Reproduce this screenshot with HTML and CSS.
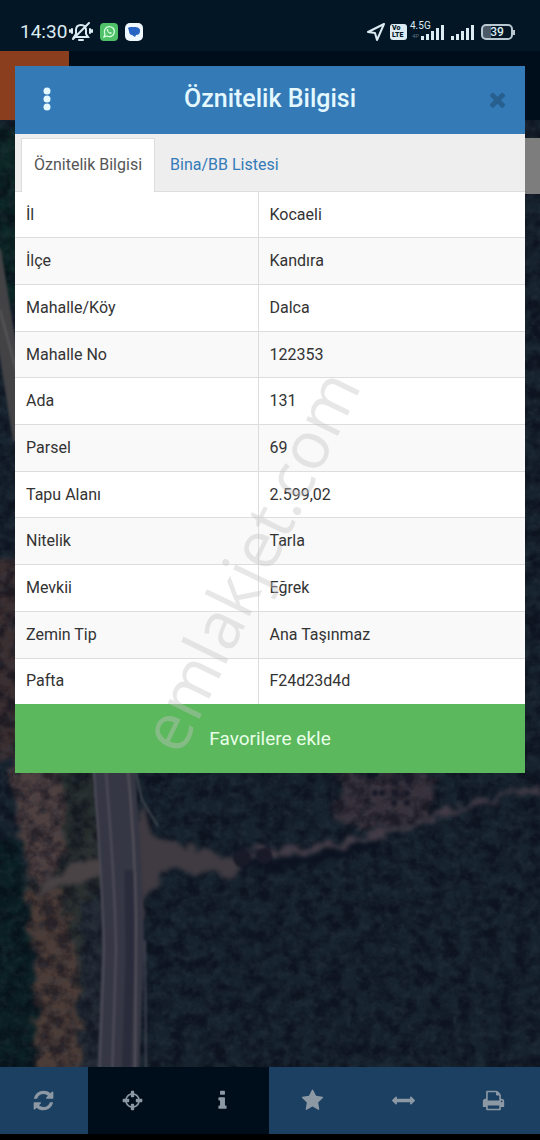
FILE: index.html
```html
<!DOCTYPE html>
<html lang="tr">
<head>
  <meta charset="UTF-8">
  <meta name="viewport" content="width=device-width, initial-scale=1">
  <title>Öznitelik Bilgisi</title>
  <link rel="stylesheet" href="styles.css">
</head>
<body>
<div class="screen">

  <header class="statusbar">
    <span class="clock">14:30</span>
    <svg class="st-bell" viewBox="0 0 24 20" fill="none" stroke="currentColor" stroke-width="2" stroke-linecap="round">
      <path d="M5 15h14l-2-3V8c0-3-2-5-5-5S7 5 7 8v4zM10 18h4M20 1 4 17M3 7v4M1 8v2M21 7v4M23 8v2"/>
    </svg>
    <svg class="st-app" viewBox="0 0 18 18">
      <rect width="18" height="18" rx="4" fill="#4fc168"/>
      <path d="M4 14l1-3a5 5 0 1 1 2 2z" fill="none" stroke="#d8ffe0" stroke-width="1.3"/>
      <path d="M7 6c-1 2 2 5 4 5l1-1-1.500-1-1 .5-1.500-1.500.5-1L8 6z" fill="#d8ffe0"/>
    </svg>
    <svg class="st-app" viewBox="0 0 18 18">
      <rect width="18" height="18" rx="5" fill="#f0f8ff"/>
      <path d="M3 5c1-1 2-1 6-1 4 0 6 1 6 4s-2 4-4 4l-1 2-3-2C5 12 4 10 4 8z" fill="#2864c4"/>
    </svg>
    <span class="spacer"></span>
    <svg class="st-nav" viewBox="0 0 20 20" fill="none" stroke="currentColor" stroke-width="2" stroke-linejoin="round">
      <path d="M18 2 2 10l7 1 2 7z"/>
    </svg>
    <span class="volte"><span>Vo</span><span>LTE</span></span>
    <span class="net"><span>4.5G</span><small>4P</small></span>
    <svg class="st-signal first" viewBox="0 0 24 16" fill="currentColor">
      <path d="M0 12h3v4H0zM5 10h3v6H5zM10 7h3v9h-3zM15 4h3v12h-3zM20 1h3v15h-3z"/>
    </svg>
    <svg class="st-signal" viewBox="0 0 24 16" fill="currentColor">
      <path d="M0 12h3v4H0zM5 10h3v6H5zM10 7h3v9h-3zM15 4h3v12h-3zM20 1h3v15h-3z"/>
    </svg>
    <span class="battery">39</span>
  </header>

  <div class="topbar"><div class="logo-cell"></div></div>

  <main class="map">
    <svg class="map-image" viewBox="0 120 540 947" preserveAspectRatio="xMidYMax slice" color-interpolation-filters="sRGB">
      <defs>
        <filter id="rough" x="-10%" y="-10%" width="120%" height="120%">
          <feTurbulence type="fractalNoise" baseFrequency="0.06" numOctaves="3" seed="4" result="n"/>
          <feDisplacementMap in="SourceGraphic" in2="n" scale="24" xChannelSelector="R" yChannelSelector="G"/>
          <feGaussianBlur stdDeviation="2"/>
        </filter>
        <filter id="soft" x="-20%" y="-5%" width="140%" height="110%">
          <feGaussianBlur stdDeviation="0.8"/>
        </filter>
        <filter id="canopy" x="0" y="0" width="100%" height="100%">
          <feTurbulence type="fractalNoise" baseFrequency="0.07" numOctaves="4" seed="11"/>
          <feColorMatrix values="0 0 0 0 0.02  0 0 0 0 0.03  0 0 0 0 0.08  3 0 0 0 -1.100"/>
          <feGaussianBlur stdDeviation="0.7"/>
        </filter>
        <filter id="glints" x="0" y="0" width="100%" height="100%">
          <feTurbulence type="fractalNoise" baseFrequency="0.13" numOctaves="3" seed="27"/>
          <feColorMatrix values="0 0 0 0 0.22  0 0 0 0 0.27  0 0 0 0 0.32  3 0 0 0 -1.300"/>
          <feGaussianBlur stdDeviation="0.7"/>
        </filter>
      </defs>

      <rect y="120" width="540" height="947" fill="#16222d"/>

      <!-- scrub and bare soil left of the road -->
      <g filter="url(#rough)">
        <path d="M-20 120h45v180h-45z" fill="#0c2625"/>
        <path d="M-20 560h50v200h-50z" fill="#3a2e30"/>
        <path d="M8 740h92v340H28L36 960 22 900l14-50z" fill="#2a2f2f"/>
        <path d="M12 760h54l10 80-40 50-20-60z" fill="#4f4040"/>
        <path d="M28 890l34-4 12 60 8 130H30l6-100z" fill="#4c3c37"/>
        <path d="M-20 830l40 10 12 100 6 140h-60z" fill="#0a1f23"/>
        <path d="M60 760h36v70l-30 20z" fill="#252c2c"/>
        <path d="M82 900h22v170H80z" fill="#232a34"/>
        <path d="M340 772h100l-10 46-60 12-36-8z" fill="#37313b"/>
      </g>

      <rect y="120" width="540" height="947" filter="url(#canopy)" opacity=".5"/>
      <rect y="120" width="540" height="947" filter="url(#glints)" opacity=".2"/>

      <!-- dirt tracks -->
      <g filter="url(#rough)">
        <path d="M104 856 70 866 40 882l-2 12 40-12 30-8z" fill="#4a4345"/>
        <path d="M136 800l14 28 34 20 60 10v16l-80-2-20 20-12 60z" fill="#403b42"/>
        <path d="M240 853l66-2 56-14 68-18 66-24 44-8" fill="none" stroke="#443d48" stroke-width="5"/>
        <path d="M240 862l70 0 70-20" fill="none" stroke="#0c1220" stroke-width="9"/>
      </g>

      <!-- main road -->
      <g filter="url(#soft)" fill="none">
        <path d="M113 760q10 120 10 190l-5 130" stroke="#363744" stroke-width="42"/>
        <path d="M129 870l1 90-4 120" stroke="#2a2c3b" stroke-width="9"/>
        <path d="M93 760q9 120 11 190l-5 130M105 760q10 120 11 190l-4 130" stroke="#4f4f5b" stroke-width="2"/>
        <path d="M127 760q8 80 9 160l-1 160" stroke="#55535c" stroke-width="2"/>
        <path d="M136 772l6 28 16 26" stroke="#3e464e" stroke-width="2"/>
        <path d="M145 940l1 140" stroke="#3d414c" stroke-width="2"/>
        <path d="M-8 250 22 440" stroke="#434346" stroke-width="18"/>
        <path d="M0 310l16 60" stroke="#6c6c6c" stroke-width="1"/>
      </g>

      <g fill="#191a28" filter="url(#soft)">
        <circle cx="375" cy="793" r="3"/><circle cx="395" cy="783" r="3"/><circle cx="408" cy="781" r="3"/>
        <circle cx="382" cy="793" r="3"/><circle cx="395" cy="793" r="3"/><circle cx="407" cy="793" r="3"/>
        <circle cx="394" cy="803" r="3"/><circle cx="407" cy="803" r="3"/>
        <circle cx="242" cy="858" r="9"/><circle cx="264" cy="856" r="8"/>
      </g>
    </svg>
    <div class="map-control"></div>
  </main>

  <nav class="toolbar">
    <button class="tool" aria-label="Yenile"><svg class="fa" viewBox="0 0 1792 1792"><path d="M1639 1056q0 5-1 7-64 268-268 434.500t-478 166.500q-146 0-282.500-55t-243.500-157l-129 129q-19 19-45 19t-45-19-19-45v-448q0-26 19-45t45-19h448q26 0 45 19t19 45-19 45l-137 137q71 66 161 102t187 36q134 0 250-65t186-179q11-17 53-117 8-23 30-23h192q13 0 22.500 9.500t9.500 22.500zm25-800v448q0 26-19 45t-45 19h-448q-26 0-45-19t-19-45 19-45l138-138q-148-137-349-137-134 0-250 65t-186 179q-11 17-53 117-8 23-30 23h-199q-13 0-22.500-9.500t-9.500-22.500v-7q65-268 270-434.500t480-166.500q146 0 284 55.500t245 156.500l130-129q19-19 45-19t45 19 19 45z"/></svg></button>
    <button class="tool dark" aria-label="Konum"><svg class="fa" viewBox="0 0 1792 1792"><path d="M1325 1024h-109q-26 0-45-19t-19-45v-128q0-26 19-45t45-19h109q-32-108-112.500-188.500t-188.500-112.500v109q0 26-19 45t-45 19h-128q-26 0-45-19t-19-45v-109q-108 32-188.500 112.500t-112.500 188.500h109q26 0 45 19t19 45v128q0 26-19 45t-45 19h-109q32 108 112.500 188.500t188.500 112.500v-109q0-26 19-45t45-19h128q26 0 45 19t19 45v109q108-32 188.500-112.500t112.500-188.500zm339-192v128q0 26-19 45t-45 19h-143q-37 161-154.500 278.500t-278.500 154.500v143q0 26-19 45t-45 19h-128q-26 0-45-19t-19-45v-143q-161-37-278.500-154.500t-154.500-278.500h-143q-26 0-45-19t-19-45v-128q0-26 19-45t45-19h143q37-161 154.500-278.500t278.500-154.500v-143q0-26 19-45t45-19h128q26 0 45 19t19 45v143q161 37 278.500 154.500t154.500 278.500h143q26 0 45 19t19 45z"/></svg></button>
    <button class="tool dark" aria-label="Bilgi"><svg class="fa" viewBox="0 0 1792 1792"><path d="M1216 1344v128q0 26-19 45t-45 19h-512q-26 0-45-19t-19-45v-128q0-26 19-45t45-19h64v-384h-64q-26 0-45-19t-19-45v-128q0-26 19-45t45-19h384q26 0 45 19t19 45v576h64q26 0 45 19t19 45zm-128-1152v192q0 26-19 45t-45 19h-256q-26 0-45-19t-19-45v-192q0-26 19-45t45-19h256q26 0 45 19t19 45z"/></svg></button>
    <button class="tool" aria-label="Favoriler"><svg class="fa" viewBox="0 0 1792 1792"><path d="M1728 647q0 22-26 48l-363 354 86 500q1 7 1 20 0 21-10.500 35.500t-30.500 14.500q-19 0-40-12l-449-236-449 236q-22 12-40 12-21 0-31.500-14.500t-10.500-35.500q0-6 2-20l86-500-364-354q-25-27-25-48 0-37 56-46l502-73 225-455q19-41 49-41t49 41l225 455 502 73q56 9 56 46z"/></svg></button>
    <button class="tool" aria-label="Ölçüm"><svg class="fa" viewBox="0 0 1792 1792"><path d="M1792 896q0 26-19 45l-256 256q-19 19-45 19t-45-19-19-45v-128h-1024v128q0 26-19 45t-45 19-45-19l-256-256q-19-19-19-45t19-45l256-256q19-19 45-19t45 19 19 45v128h1024v-128q0-26 19-45t45-19 45 19l256 256q19 19 19 45z"/></svg></button>
    <button class="tool" aria-label="Yazdır"><svg class="fa" viewBox="0 0 1792 1792"><path d="M448 1536h896v-256h-896v256zm0-640h896v-384h-160q-40 0-68-28t-28-68v-160h-640v640zm1152 64q0-26-19-45t-45-19-45 19-19 45 19 45 45 19 45-19 19-45zm128 0v416q0 13-9.500 22.500t-22.500 9.500h-224v160q0 40-28 68t-68 28h-960q-40 0-68-28t-28-68v-160h-224q-13 0-22.500-9.500t-9.500-22.500v-416q0-79 56.500-135.500t135.500-56.500h64v-544q0-40 28-68t68-28h672q40 0 88 20t76 48l152 152q28 28 48 76t20 88v256h64q79 0 135.500 56.500t56.500 135.500z"/></svg></button>
  </nav>

  <section class="modal">
    <div class="modal-header">
      <button class="icon-btn" aria-label="Menü"><svg class="dots" viewBox="0 0 8 24"><circle cx="4" cy="4" r="3.500"/><circle cx="4" cy="12" r="3.500"/><circle cx="4" cy="20" r="3.500"/></svg></button>
      <h1>Öznitelik Bilgisi</h1>
      <button class="icon-btn close" aria-label="Kapat"><svg class="fa" viewBox="0 0 1792 1792"><path d="M1490 1322q0 40-28 68l-136 136q-28 28-68 28t-68-28l-294-294-294 294q-28 28-68 28t-68-28l-136-136q-28-28-28-68t28-68l294-294-294-294q-28-28-28-68t28-68l136-136q28-28 68-28t68 28l294 294 294-294q28-28 68-28t68 28l136 136q28 28 28 68t-28 68l-294 294 294 294q28 28 28 68z"/></svg></button>
    </div>

    <div class="tabs">
      <a href="#oznitelik" class="tab active">Öznitelik Bilgisi</a>
      <a href="#bina" class="tab">Bina/BB Listesi</a>
    </div>

    <table class="attributes" id="oznitelik">
      <tr><th scope="row">İl</th><td>Kocaeli</td></tr>
      <tr><th scope="row">İlçe</th><td>Kandıra</td></tr>
      <tr><th scope="row">Mahalle/Köy</th><td>Dalca</td></tr>
      <tr><th scope="row">Mahalle No</th><td>122353</td></tr>
      <tr><th scope="row">Ada</th><td>131</td></tr>
      <tr><th scope="row">Parsel</th><td>69</td></tr>
      <tr><th scope="row">Tapu Alanı</th><td>2.599,02</td></tr>
      <tr><th scope="row">Nitelik</th><td>Tarla</td></tr>
      <tr><th scope="row">Mevkii</th><td>Eğrek</td></tr>
      <tr><th scope="row">Zemin Tip</th><td>Ana Taşınmaz</td></tr>
      <tr><th scope="row">Pafta</th><td>F24d23d4d</td></tr>
    </table>

    <button class="btn-success">Favorilere ekle</button>
    <div class="watermark">emlakjet.com</div>
  </section>

</div>
</body>
</html>
```

FILE: styles.css
```css
* {
  box-sizing: border-box;
}

body {
  margin: 0;
  background: #000;
  font-family: Roboto, "Liberation Sans", sans-serif;
  font-size: 16px;
  color: #333;
}

button {
  margin: 0;
  padding: 0;
  border: 0;
  background: none;
  font: inherit;
  cursor: pointer;
}

.screen {
  position: relative;
  display: flex;
  flex-direction: column;
  min-height: 100vh;
  padding-bottom: 6px;
}

/* phone status bar */
.statusbar {
  display: flex;
  align-items: center;
  height: 51px;
  padding: 12px 27px 0 20px;
  background: #021625;
  color: #dcebf2;
}

.clock {
  font-size: 19px;
  line-height: 24px;
}

.st-bell {
  width: 24px;
  height: 20px;
  margin-left: 2px;
}

.st-app {
  width: 18px;
  height: 18px;
  margin-left: 7px;
}

.spacer {
  flex: 1;
}

.st-nav {
  width: 20px;
  height: 20px;
}

.volte {
  display: flex;
  flex-direction: column;
  width: 17px;
  height: 16px;
  margin-left: 4px;
  padding: 1px 2px;
  border-radius: 3px;
  background: #dcebf2;
  color: #021625;
  font-size: 7px;
  font-weight: 900;
  line-height: 7px;
}

.net {
  display: flex;
  flex-direction: column;
  width: 11px;
  margin-left: 3px;
  padding-bottom: 2px;
  font-size: 10px;
  line-height: 10px;
  white-space: nowrap;
}

.net small {
  padding-left: 2px;
  font-size: 6px;
  color: #5b6c78;
}

.st-signal {
  width: 24px;
  height: 16px;
  margin-left: 6px;
}

.st-signal.first {
  margin-left: 0;
}

.battery {
  position: relative;
  width: 32px;
  height: 16px;
  margin-left: 6px;
  border: 2px solid #b9c7d0;
  border-radius: 5px;
  background: linear-gradient(90deg, #4a5965 30%, transparent 30%);
  font-size: 12px;
  font-weight: 500;
  line-height: 12px;
  text-align: center;
}

.battery::after {
  content: "";
  position: absolute;
  top: 4px;
  right: -4px;
  width: 2px;
  height: 5px;
  background: #b9c7d0;
}

.topbar {
  height: 69px;
  background: #000d1a;
}

.logo-cell {
  width: 69px;
  height: 100%;
  background: #8a3e1d;
}

/* map */
.map {
  position: relative;
  flex: 1;
  min-height: 650px;
  overflow: hidden;
}

.map-image {
  position: absolute;
  width: 100%;
  height: 100%;
}

.map-control {
  position: absolute;
  top: 18px;
  right: 0;
  width: 54px;
  height: 56px;
  background: #7d7d7d;
}

.toolbar {
  display: grid;
  grid-template-columns: 88px repeat(5, 1fr);
  height: 67px;
  background: #000e1b;
}

.tool {
  display: flex;
  align-items: center;
  justify-content: center;
  padding-right: 2px;
  background: #1b4062;
  color: #8c98a4;
}

.tool.dark {
  background: #000e1b;
}

.fa {
  width: 23px;
  height: 23px;
  fill: currentColor;
}

/* attribute window */
.modal {
  position: absolute;
  top: 66px;
  left: 15px;
  right: 15px;
  background: #fff;
}

.modal-header {
  display: flex;
  align-items: center;
  height: 68px;
  padding: 0 16px 2px;
  background: #337ab7;
  color: #e3f8ff;
}

.modal-header h1 {
  flex: 1;
  margin: 0;
  font-size: 25px;
  font-weight: 500;
  line-height: 32px;
  text-align: center;
}

.icon-btn {
  display: flex;
  align-items: center;
  justify-content: center;
  width: 32px;
  height: 40px;
}

.dots {
  width: 8px;
  height: 24px;
  fill: #e3f8ff;
}

.close {
  color: #27608f;
}

.modal-header .close {
  justify-content: flex-end;
}

.tabs {
  display: flex;
  height: 58px;
  padding: 4px 6px 0;
  border-bottom: 1px solid #ddd;
  background: #eee;
}

.tab {
  height: 54px;
  padding: 14px 12px;
  border: 1px solid transparent;
  border-bottom: 0;
  color: #337ab7;
  line-height: 24px;
  text-decoration: none;
}

.tab + .tab {
  margin-left: 2px;
}

.tab.active {
  border-color: #ddd;
  background: #fff;
  color: #555;
}

.attributes {
  width: 100%;
  height: 512px;
  border-collapse: collapse;
}

.attributes th,
.attributes td {
  padding: 0 11px;
  border-bottom: 1px solid #ddd;
  font-weight: 400;
  line-height: 24px;
  text-align: left;
}

.attributes th {
  width: 243px;
  border-right: 1px solid #ddd;
}

.attributes tr:nth-child(even) {
  background: #f9f9f9;
}

.attributes tr:last-child > * {
  border-bottom: 0;
}

.btn-success {
  display: block;
  width: 100%;
  height: 69px;
  background: #5cb85c;
  color: #e8ffe8;
  font-size: 19px;
}

.watermark {
  position: absolute;
  top: 450px;
  left: 50%;
  margin-left: -22px;
  font-family: "Open Sans", sans-serif;
  font-size: 66px;
  line-height: 88px;
  color: rgba(196, 196, 196, .4);
  transform: translate(-50%, 0) rotate(-64deg);
  pointer-events: none;
}
```
